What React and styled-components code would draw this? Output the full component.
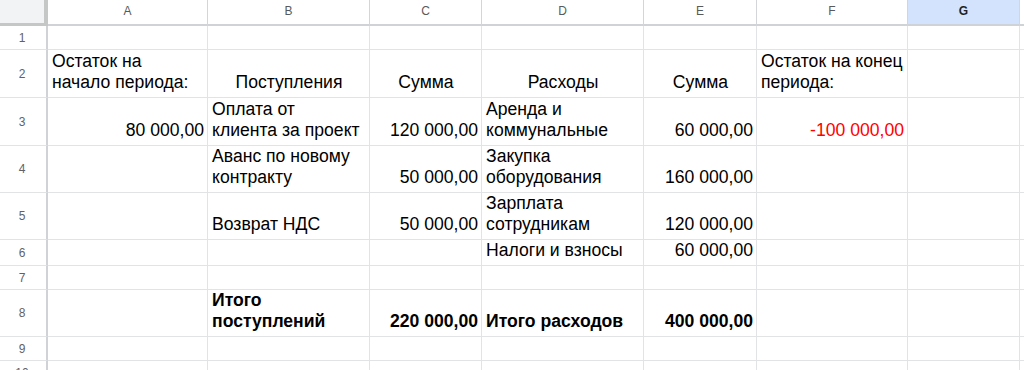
import React from "react";
import styled, { createGlobalStyle } from "styled-components";

const GlobalStyle = createGlobalStyle`
  html, body {
    margin: 0;
    padding: 0;
    background: #ffffff;
    overflow: hidden;
  }
  body {
    font-family: "Liberation Sans", Arial, sans-serif;
  }
`;

const columns = [
  { name: "A", width: 160 },
  { name: "B", width: 162 },
  { name: "C", width: 112 },
  { name: "D", width: 162 },
  { name: "E", width: 113 },
  { name: "F", width: 151 },
  { name: "G", width: 112, active: true },
  { name: "", width: 100 },
];

// each row: number, height, cells keyed by column letter
const rows = [
  { n: 1, h: 24, cells: {} },
  {
    n: 2,
    h: 48,
    cells: {
      A: { t: "Остаток на\nначало периода:" },
      B: { t: "Поступления", a: "center" },
      C: { t: "Сумма", a: "center" },
      D: { t: "Расходы", a: "center" },
      E: { t: "Сумма", a: "center" },
      F: { t: "Остаток на конец\nпериода:" },
    },
  },
  {
    n: 3,
    h: 48,
    cells: {
      A: { t: "80 000,00", a: "right" },
      B: { t: "Оплата от\nклиента за проект" },
      C: { t: "120 000,00", a: "right" },
      D: { t: "Аренда и\nкоммунальные" },
      E: { t: "60 000,00", a: "right" },
      F: { t: "-100 000,00", a: "right", red: true },
    },
  },
  {
    n: 4,
    h: 47,
    cells: {
      B: { t: "Аванс по новому\nконтракту" },
      C: { t: "50 000,00", a: "right" },
      D: { t: "Закупка\nоборудования" },
      E: { t: "160 000,00", a: "right" },
    },
  },
  {
    n: 5,
    h: 47,
    cells: {
      B: { t: "Возврат НДС" },
      C: { t: "50 000,00", a: "right" },
      D: { t: "Зарплата\nсотрудникам" },
      E: { t: "120 000,00", a: "right" },
    },
  },
  {
    n: 6,
    h: 26,
    cells: {
      D: { t: "Налоги и взносы" },
      E: { t: "60 000,00", a: "right" },
    },
  },
  { n: 7, h: 24, cells: {} },
  {
    n: 8,
    h: 47,
    cells: {
      B: { t: "Итого\nпоступлений", bold: true },
      C: { t: "220 000,00", a: "right", bold: true },
      D: { t: "Итого расходов", bold: true },
      E: { t: "400 000,00", a: "right", bold: true },
    },
  },
  { n: 9, h: 24, cells: {} },
  { n: 10, h: 24, cells: {} },
];

export default function App() {
  return (
    <>
      <GlobalStyle />
      <Sheet
        $cols={columns.map((c) => c.width + "px").join(" ")}
        $rows={rows.map((r) => r.h + "px").join(" ")}
      >
        <Corner />
        {columns.map((c, i) => (
          <ColHeader key={i} $active={c.active}>
            {c.name}
          </ColHeader>
        ))}
        {rows.map((r) => (
          <React.Fragment key={r.n}>
            <RowHeader>{r.n}</RowHeader>
            {columns.map((c, i) => {
              const cell = r.cells[c.name] || {};
              return (
                <Cell
                  key={i}
                  $align={cell.a || "left"}
                  $bold={cell.bold}
                  $red={cell.red}
                >
                  {cell.t && <CellText>{cell.t}</CellText>}
                </Cell>
              );
            })}
          </React.Fragment>
        ))}
      </Sheet>
    </>
  );
}

const Sheet = styled.div`
  display: grid;
  grid-template-columns: 48px ${(p) => p.$cols};
  grid-template-rows: 26px ${(p) => p.$rows};
  width: 1024px;
  overflow: hidden;
`;

const Corner = styled.div`
  box-sizing: border-box;
  background: #f1f3f4;
  border-right: 4px solid #c4c7c5;
  border-bottom: 3px solid #c4c7c5;
`;

const ColHeader = styled.div`
  box-sizing: border-box;
  display: flex;
  align-items: center;
  justify-content: center;
  padding-bottom: 2px;
  font-size: 12px;
  font-weight: ${(p) => (p.$active ? 700 : 400)};
  color: ${(p) => (p.$active ? "#1f1f1f" : "#575a5c")};
  background: ${(p) => (p.$active ? "#d3e3fd" : "#ffffff")};
  border-right: 1px solid #d3d6d8;
  border-bottom: 2px solid #d0d3d5;
`;

const RowHeader = styled.div`
  box-sizing: border-box;
  display: flex;
  align-items: center;
  justify-content: center;
  font-size: 12px;
  color: #5f6368;
  background: #ffffff;
  border-right: 2px solid #d0d3d5;
  border-bottom: 1px solid #e1e3e5;
  padding-right: 2px;
`;

const Cell = styled.div`
  box-sizing: border-box;
  display: flex;
  align-items: flex-end;
  justify-content: ${(p) =>
    p.$align === "right" ? "flex-end" : p.$align === "center" ? "center" : "flex-start"};
  text-align: ${(p) => p.$align};
  padding: 0 3px 4px 4px;
  font-size: 17.6px;
  line-height: 21px;
  font-weight: ${(p) => (p.$bold ? 700 : 400)};
  color: ${(p) => (p.$red ? "#ff0000" : "#000000")};
  border-right: 1px solid #e1e3e5;
  border-bottom: 1px solid #e1e3e5;
  overflow: hidden;
`;

const CellText = styled.span`
  white-space: pre-line;
`;
